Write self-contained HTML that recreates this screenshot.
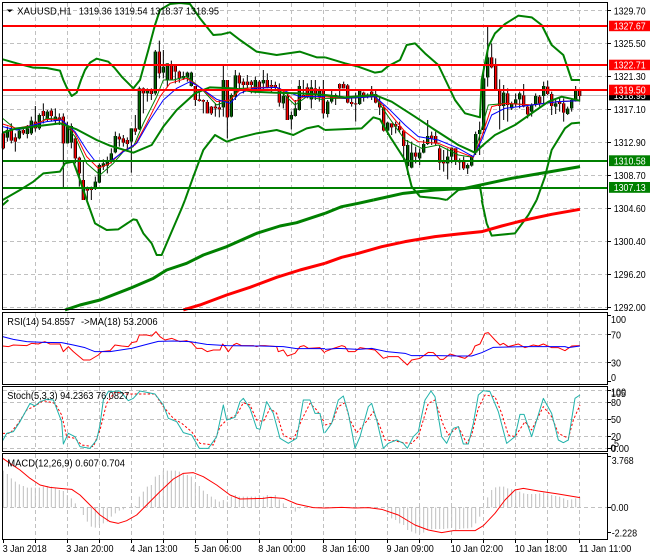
<!DOCTYPE html>
<html><head><meta charset="utf-8"><title>XAUUSD,H1</title>
<style>
html,body{margin:0;padding:0;background:#fff;width:650px;height:560px;overflow:hidden}
svg{display:block}
text{font-family:"Liberation Sans",sans-serif;font-size:10.5px;fill:#000}
.w{fill:#fff}
.g{stroke:#c0c0c0;stroke-width:1;stroke-dasharray:4 3;fill:none}
.p{fill:none;stroke-linejoin:round}
.bb{stroke:#008000;stroke-width:6}
.th{stroke-width:9}
.t{stroke-width:3}
</style></head><body>
<svg width="650" height="560" viewBox="0 0 650 560" xmlns="http://www.w3.org/2000/svg">
<rect width="650" height="560" fill="#fff"/>
<defs>
<path id="ra" d="M10 400V445M34 385V422M46 412V425M70 390V400M106 365V385M130 333V348M154 332V348M178 352V360M190 350V430M226 415V475M238 473V520M250 540V600M262 565V572M274 562V570M358 410V418M370 415V428M382 420V432M406 385V395M430 265V280M454 268V282M478 155V220M514 195V238M526 195V215M538 215V235M586 258V300M598 298V303M610 300V305M622 306V340M634 320V340M646 320V325M658 322V328M682 240V352M718 226V250M730 245V255M742 245V255M754 245V255M778 245V272M802 240V262M814 255V260M826 255V262M838 265V308M862 288V360M910 285V292M922 262V292M946 265V285M970 268V340"/>
<path id="ga" d="M22 390V413M58 392V415M82 385V402M94 362V400M118 345V385M142 335V358M166 350V362M202 380V430M214 378V428M286 545V565M298 495V548M310 490V500M322 483V497M334 460V480M346 408V457M394 385V425M418 265V388M442 267V280M466 155V280M490 200V218M502 190V240M550 228V235M562 218V232M574 218V258M670 240V322M694 285V350M706 226V290M766 240V272M790 240V250M850 288V310M874 345V358M886 325V348M898 258V330M934 262V298M958 268V290"/>
<path id="rb" d="M44 252V265M56 252V265M68 256V308M80 306V312M92 310V313M116 278V285M140 275V290M152 282V308M164 308V322M176 322V392M200 370V382M212 372V380M224 378V390M236 392V438M272 458V470M320 407V415M332 408V430M344 445V488M356 480V490M392 445V485M404 480V487M416 483V505M500 172V202M512 198V270M524 270V318M548 280V315M596 286V320M608 320V343M644 290V310M668 260V282M680 282V318M704 305V312M716 310V338M764 272V288"/>
<path id="gb" d="M8 305V342M20 285V305M32 285V292M104 272V312M128 284V292M188 368V392M248 435V498M260 458V503M284 458V475M296 432V458M308 408V432M368 470V490M380 443V470M428 495V505M440 468V497M452 402V458M464 390V402M476 235V390M488 172V232M536 278V318M560 312V325M572 298V312M584 280V298M620 315V335M632 288V312M656 258V288M692 310V320M728 326V342M740 300V325M752 272V302"/>
</defs>

<!-- grid -->
<path class="g" d="M35.5 3V310M67.5 3V310M99.5 3V310M131.5 3V310M163.5 3V310M195.5 3V310M227.5 3V310M259.5 3V310M291.5 3V310M323.5 3V310M355.5 3V310M387.5 3V310M419.5 3V310M451.5 3V310M483.5 3V310M515.5 3V310M547.5 3V310M579.5 3V310"/>
<path class="g" d="M35.5 313V384M67.5 313V384M99.5 313V384M131.5 313V384M163.5 313V384M195.5 313V384M227.5 313V384M259.5 313V384M291.5 313V384M323.5 313V384M355.5 313V384M387.5 313V384M419.5 313V384M451.5 313V384M483.5 313V384M515.5 313V384M547.5 313V384M579.5 313V384"/>
<path class="g" d="M35.5 387V451M67.5 387V451M99.5 387V451M131.5 387V451M163.5 387V451M195.5 387V451M227.5 387V451M259.5 387V451M291.5 387V451M323.5 387V451M355.5 387V451M387.5 387V451M419.5 387V451M451.5 387V451M483.5 387V451M515.5 387V451M547.5 387V451M579.5 387V451"/>
<path class="g" d="M35.5 454V539M67.5 454V539M99.5 454V539M131.5 454V539M163.5 454V539M195.5 454V539M227.5 454V539M259.5 454V539M291.5 454V539M323.5 454V539M355.5 454V539M387.5 454V539M419.5 454V539M451.5 454V539M483.5 454V539M515.5 454V539M547.5 454V539M579.5 454V539"/>
<path class="g" d="M3 10.5H607M3 43.5H607M3 76.5H607M3 109.5H607M3 142.5H607M3 175.5H607M3 208.5H607M3 241.5H607M3 274.5H607M3 307.5H607M3 334.5H607M3 362.5H607M3 390.5H607M3 402.5H607M3 419.5H607M3 436.5H607M3 448.5H607M3 507.5H607"/>

<!-- bid line -->
<path d="M3 95.5H608" stroke="#c0c0c0" stroke-width="1"/>

<!-- MACD histogram -->
<g stroke="#c0c0c0" fill="none">
<g transform="translate(0,380) scale(.33333)" stroke-width="3">
<path d="M10 382V272M22 382V282M34 382V295M46 382V305M58 382V313M70 382V318M82 382V323M94 382V323M106 382V323M118 382V323M130 382V320M142 382V318M154 382V320M166 382V325M178 382V330M190 382V333M202 382V345M214 382V355M226 382V370M250 382V405M262 382V425M274 382V440M286 382V443M298 382V435M310 382V430M322 382V425M334 382V410M346 382V400M358 382V392M370 382V388M394 382V375M406 382V378M418 382V350M430 382V335M442 382V320M454 382V315M466 382V290M478 382V285M490 382V272M502 382V272M514 382V272M526 382V272M538 382V275M550 382V282M562 382V285M574 382V290M586 382V310M598 382V318M610 382V332M622 382V342M634 382V350M646 382V358M658 382V365M670 382V360M682 382V365M694 382V350M706 382V345M718 382V350M730 382V350M742 382V350M754 382V350M766 382V350M778 382V345M790 382V350M802 382V345M814 382V350M826 382V345M838 382V358M850 382V370M874 382V378M886 382V395M898 382V385"/>
</g>
<g transform="translate(325,380) scale(.33333)" stroke-width="3">
<path d="M188 382V405M200 382V415M212 382V420M224 382V430M236 382V435M248 382V450M260 382V455M272 382V460M284 382V462M296 382V458M308 382V450M320 382V448M332 382V447M344 382V447M356 382V447M368 382V445M380 382V442M392 382V450M404 382V447M416 382V445M428 382V445M440 382V442M452 382V430M464 382V410M476 382V385M488 382V352M500 382V330M512 382V322M524 382V320M536 382V320M548 382V325M560 382V328M572 382V330M584 382V335M596 382V340M608 382V342M620 382V342M632 382V342M644 382V340M656 382V338M668 382V340M680 382V345M692 382V348M704 382V350M716 382V355M728 382V360M740 382V358M752 382V355M764 382V352"/>
</g>
</g>

<!-- group A -->
<g transform="scale(.33333)" fill="none">
<path stroke="#000" stroke-width="3" d="M10 395V448M22 380V425M34 370V430M46 400V455M58 385V418M70 380V405M82 375V415M94 350V405M106 318V395M118 340V390M130 310V370M142 330V365M154 325V365M166 325V370M178 340V375M190 340V562M202 365V430M214 370V445M226 410V490M238 470V560M250 480V600M262 560V600M274 560V600M286 530V570M298 490V550M310 478V510M322 470V520M334 445V490M346 395V460M358 400V440M370 405V440M382 412V445M394 385V518M406 345V405M418 260V390M430 262V340M442 265V305M454 265V300M466 150V285M478 122V235M490 150V235M502 190V262M514 182V240M526 195V250M538 212V248M550 215V240M562 215V245M574 215V260M586 258V318M598 275V305M610 298V340M622 300V340M634 318V345M646 310V350M658 300V352M670 195V350M682 240V415M694 280V352M706 210V300M718 218V265M730 235V280M742 225V270M754 240V280M766 230V280M778 240V280M790 210V270M802 220V265M814 240V275M826 245V270M838 250V320M850 280V325M862 280V360M874 335V388M886 300V350M898 240V332M910 240V290M922 250V295M934 240V325M946 240V300M958 260V305M970 240V355"/>
<use href="#ra" stroke="#000" stroke-width="10"/><use href="#ga" stroke="#000" stroke-width="10"/>
<use href="#ra" stroke="#f00" stroke-width="5"/><use href="#ga" stroke="#006400" stroke-width="5"/>
<polyline class="p t" stroke="#008000" points="8,355 50,390 100,380 140,355 185,358 225,410 260,490 300,525 340,490 370,455 400,440 430,370 470,290 490,240 520,240 560,230 600,262 650,315 690,300 720,265 830,262 885,315 920,290 975,300"/>
<polyline class="p t" stroke="#f00" points="8,372 50,385 100,375 140,358 185,358 225,400 260,470 295,505 330,490 370,452 405,435 440,370 480,290 510,250 560,235 600,262 650,305 690,300 720,270 760,262 830,262 860,280 885,305 920,285 975,295"/>
<polyline class="p t" stroke="#00f" points="8,380 50,390 100,375 140,365 185,360 225,395 260,450 285,483 330,485 370,455 410,430 450,360 490,300 530,265 570,245 600,262 650,298 690,310 720,280 760,265 830,262 860,275 900,290 975,290"/>
<polyline class="p bb" points="8,178 50,190 100,203 140,204 180,212 190,240 200,262 215,288 230,278 243,240 255,210 270,188 290,176 325,185 345,205 365,230 400,265 420,240 445,150 465,75 480,30 510,12 540,9 570,12 600,55 640,105 665,103 690,97 720,120 770,155 830,165 900,155 950,172 975,172"/>
<polyline class="p bb" points="8,398 50,385 100,380 180,370 230,388 290,420 330,437 400,458 455,435 490,380 530,330 585,280 630,262 700,265 760,275 820,278 900,280 975,285"/>
<polyline class="p bb" points="8,600 60,570 100,545 130,520 180,515 195,490 220,485 240,540 260,600"/>
<polyline class="p bb" points="555,600 580,530 610,450 645,405 680,425 710,415 770,400 830,390 880,405 920,385 955,378 975,390"/>
</g>

<!-- group B -->
<g transform="translate(325,0) scale(.33333)" fill="none">
<path stroke="#000" stroke-width="3" d="M8 300V352M20 270V310M32 280V315M44 250V295M56 245V265M68 252V310M80 290V320M92 278V365M104 270V315M116 275V305M128 280V295M140 258V300M152 270V310M164 290V345M176 315V395M188 365V405M200 370V405M212 365V400M224 365V398M236 390V485M248 420V525M260 425V505M272 440V490M284 445V495M296 420V460M308 360V435M320 395V435M332 395V435M344 435V510M356 450V515M368 445V538M380 442V490M392 445V495M404 475V510M416 470V510M428 490V522M440 465V500M452 395V465M464 365V465M476 195V400M488 78V260M500 130V205M512 175V270M524 238V388M536 255V360M548 265V365M560 305V330M572 280V320M584 275V325M596 252V322M608 315V355M620 310V350M632 280V320M644 285V320M656 245V310M668 242V285M680 275V345M692 300V342M704 295V335M716 295V365M728 320V345M740 295V335M752 258V305M764 270V305"/>
<use href="#rb" stroke="#000" stroke-width="10"/><use href="#gb" stroke="#000" stroke-width="10"/>
<use href="#rb" stroke="#f00" stroke-width="5"/><use href="#gb" stroke="#006400" stroke-width="5"/>
<polyline class="p t" stroke="#008000" points="0,295 60,295 150,290 190,350 240,420 290,445 340,435 400,465 445,472 470,385 490,315 540,310 620,315 700,305 765,302"/>
<polyline class="p t" stroke="#f00" points="0,290 60,295 150,290 190,335 240,395 280,425 340,430 400,455 445,472 470,410 500,320 540,310 620,315 700,305 765,302"/>
<polyline class="p t" stroke="#00f" points="0,285 60,295 150,290 190,325 240,375 280,410 340,420 400,445 445,470 470,420 500,345 540,325 620,315 700,305 765,302"/>
<polyline class="p bb" points="0,172 60,190 100,200 150,218 170,215 190,198 225,180 245,135 270,130 300,160 340,195 390,300 420,340 465,352 470,240 490,140 510,100 540,72 580,47 620,52 650,75 680,135 715,165 740,240 765,240"/>
<polyline class="p bb" points="0,285 60,292 150,285 200,305 270,350 330,390 400,435 450,458 480,430 510,405 570,375 620,340 670,305 710,290 765,302"/>
<polyline class="p bb" points="0,390 110,385 145,352 165,358 195,410 240,480 260,560 285,590 340,595 365,600"/>
<polyline class="p bb" points="365,600 400,570 465,560 472,600"/>
<polyline class="p bb" points="635,600 660,530 680,450 720,385 740,370 765,368"/>
<polyline class="p bb th" points="145,600 235,580 330,570 420,565 490,550 560,535 660,518 765,500"/>
</g>

<!-- group C -->
<g transform="translate(0,200) scale(.33333)" fill="none">
<polyline class="p bb" points="8,15 25,0"/>
<polyline class="p bb" points="260,0 285,70 320,90 355,88 400,58 410,60 430,100 455,130 470,165 485,165 515,95 545,25 555,0"/>
<polyline class="p bb th" points="195,330 240,315 300,300 390,265 460,235 500,210 560,190 610,165 680,140 770,100 840,78 890,68 975,40"/>
<polyline class="p th" stroke="#f00" points="550,330 600,315 680,285 750,262 830,232 900,210 975,190"/>
<polyline class="p t" stroke="#f00" points="8,438 25,440 40,435 80,437 95,430 115,432 125,428 135,425 150,432 180,432 190,455 205,440 220,455 250,480 270,480 295,465 305,455 330,452 345,435 365,438 385,440 395,428 410,425 418,405 440,405 455,408 468,395 480,410 495,420 515,415 540,425 560,422 575,428 590,445 605,445 622,455 640,450 660,450 668,432 675,440 685,455 700,435 710,430 725,437 760,437 770,440 780,437 795,437 830,440 835,455 850,450 862,468 885,460 900,440 912,437 925,445 960,443 975,460"/>
<polyline class="p t" stroke="#00f" points="8,410 40,418 80,425 130,427 185,428 220,435 255,443 285,455 330,455 395,445 440,433 475,424 520,423 570,425 620,433 680,437 780,438 850,440 890,446 975,446"/>
</g>

<!-- group D -->
<g transform="translate(325,200) scale(.33333)" fill="none">
<polyline class="p bb th" points="0,40 50,20 100,10 145,0"/>
<polyline class="p bb" points="470,0 485,70 500,107 570,100 610,45 635,0"/>
<polyline class="p th" stroke="#f00" points="0,190 50,172 100,160 170,140 240,125 330,110 400,102 470,95 530,78 600,60 680,43 765,28"/>
<polyline class="p t" stroke="#f00" points="0,455 20,447 50,437 60,440 70,455 90,455 105,443 130,447 150,450 175,475 190,470 220,470 247,495 260,480 285,475 310,457 325,458 345,478 355,478 375,462 395,468 420,475 440,460 450,438 465,432 480,400 490,398 510,420 525,435 535,430 550,440 580,432 600,443 625,435 640,438 655,432 680,443 700,443 720,452 740,438 765,437"/>
<polyline class="p t" stroke="#00f" points="0,448 40,445 100,448 140,445 185,455 240,460 260,467 340,467 400,468 440,468 470,458 505,442 600,440 720,440 730,443 765,438"/>
</g>

<!-- group E -->
<g transform="translate(0,380) scale(.33333)" fill="none">
<polyline class="p t" stroke="#f00" stroke-dasharray="7 6" points="8,160 30,160 55,130 80,90 105,78 130,62 165,70 185,105 200,170 225,175 245,195 280,200 300,150 320,70 345,35 375,42 410,42 465,42 490,80 520,115 545,130 575,155 600,190 640,195 660,140 680,120 710,105 730,68 750,75 770,120 790,125 810,85 830,100 850,165 880,180 905,120 930,70 950,90 972,125"/>
<polyline class="p t" stroke="#20b2aa" points="8,182 20,160 40,155 60,125 90,70 105,78 120,65 140,58 160,60 185,125 190,192 205,160 225,170 240,200 270,205 290,180 300,135 310,60 325,35 360,33 385,62 400,55 420,33 465,42 490,75 505,115 530,125 550,158 575,165 598,205 625,205 650,170 670,75 680,120 705,112 720,65 730,55 750,85 770,145 780,148 800,65 820,100 840,175 865,190 890,175 910,60 930,60 945,100 960,100 972,160"/>
<polyline class="p t" stroke="#f00" points="8,235 30,250 60,270 90,295 120,315 150,322 180,325 215,328 240,345 270,375 300,405 330,425 355,430 380,422 410,405 440,375 480,335 520,297 550,280 580,278 610,290 650,315 690,345 720,357 790,355 810,352 850,355 890,372 940,383 975,384"/>
</g>

<!-- group F -->
<g transform="translate(325,380) scale(.33333)" fill="none">
<polyline class="p t" stroke="#f00" stroke-dasharray="7 6" points="0,135 20,130 40,80 60,68 75,120 95,158 120,130 145,95 165,140 180,180 205,182 235,188 260,190 280,170 310,70 330,60 355,135 370,165 400,140 425,190 440,165 460,85 480,45 510,50 530,100 550,165 570,170 600,125 620,150 655,80 680,110 700,160 730,175 745,120 765,75"/>
<polyline class="p t" stroke="#20b2aa" points="0,158 20,130 40,60 55,48 70,100 90,205 105,170 130,80 140,70 155,120 175,205 190,190 215,180 235,190 247,205 265,170 280,155 300,60 318,33 330,50 350,170 365,190 385,145 400,140 415,192 430,192 445,130 460,45 475,32 495,35 520,95 545,190 570,170 585,103 597,103 620,170 655,55 680,100 700,180 715,188 730,180 750,55 765,45"/>
<polyline class="p t" stroke="#f00" points="0,384 50,382 90,384 130,383 170,388 220,405 270,435 310,450 350,458 385,452 450,452 475,437 510,400 540,360 570,330 595,325 640,333 700,342 765,353"/>
</g>

<!-- horizontal levels -->
<g stroke-width="2" fill="none">
<path stroke="#f00" d="M3 26H608M3 65H608M3 90H608"/>
<path stroke="#008000" d="M3 161H608M3 188H608"/>
</g>

<!-- frames -->
<g stroke="#000" stroke-width="1" fill="none">
<rect x="2.5" y="2.5" width="605" height="307"/>
<rect x="2.5" y="312.5" width="605" height="72"/>
<rect x="2.5" y="386.5" width="605" height="65"/>
<rect x="2.5" y="453.5" width="605" height="86"/>
</g>
<path stroke="#000" stroke-width="1" d="M608 10.5h3M608 43.5h3M608 76.5h3M608 109.5h3M608 142.5h3M608 175.5h3M608 208.5h3M608 241.5h3M608 274.5h3M608 307.5h3M608 315.5h3M608 334.5h3M608 362.5h3M608 381.5h3M608 390.5h3M608 402.5h3M608 419.5h3M608 436.5h3M608 448.5h3M608 456.5h3M608 507.5h3M608 532.5h3M3.5 539v4M35.5 539v4M67.5 539v4M99.5 539v4M131.5 539v4M163.5 539v4M195.5 539v4M227.5 539v4M259.5 539v4M291.5 539v4M323.5 539v4M355.5 539v4M387.5 539v4M419.5 539v4M451.5 539v4M483.5 539v4M515.5 539v4M547.5 539v4M579.5 539v4"/>

<!-- legends -->
<path d="M6.5 9.5h6.4l-3.2 2.8z" fill="#000"/>
<text x="17.3" y="14.3" textLength="54.4" lengthAdjust="spacingAndGlyphs">XAUUSD,H1</text>
<text x="78.7" y="14.3" textLength="140.3" lengthAdjust="spacingAndGlyphs">1319.36 1319.54 1318.37 1318.95</text>
<text x="7.3" y="325.2" textLength="67.7" lengthAdjust="spacingAndGlyphs">RSI(14) 54.8557</text>
<text x="81" y="325.2" textLength="76.7" lengthAdjust="spacingAndGlyphs">-&gt;MA(18) 53.2006</text>
<text x="7.3" y="398.8" textLength="122" lengthAdjust="spacingAndGlyphs">Stoch(5,3,3) 94.2363 76.0827</text>
<text x="7.3" y="466.3" textLength="117.7" lengthAdjust="spacingAndGlyphs">MACD(12,26,9) 0.607 0.704</text>

<!-- price axis -->
<g>
<text x="613.7" y="14.3" textLength="32" lengthAdjust="spacingAndGlyphs">1329.70</text>
<text x="613.7" y="47" textLength="32" lengthAdjust="spacingAndGlyphs">1325.50</text>
<text x="613.7" y="80" textLength="32" lengthAdjust="spacingAndGlyphs">1321.30</text>
<text x="613.7" y="113" textLength="32" lengthAdjust="spacingAndGlyphs">1317.10</text>
<text x="613.7" y="146" textLength="32" lengthAdjust="spacingAndGlyphs">1312.90</text>
<text x="613.7" y="179" textLength="32" lengthAdjust="spacingAndGlyphs">1308.70</text>
<text x="613.7" y="212" textLength="32" lengthAdjust="spacingAndGlyphs">1304.60</text>
<text x="613.7" y="245" textLength="32" lengthAdjust="spacingAndGlyphs">1300.40</text>
<text x="613.7" y="278" textLength="32" lengthAdjust="spacingAndGlyphs">1296.20</text>
<text x="613.7" y="311" textLength="32" lengthAdjust="spacingAndGlyphs">1292.00</text>

<rect x="609" y="20.7" width="41" height="10.5" fill="#f00"/>
<text class="w" x="613.7" y="29.6" textLength="32" lengthAdjust="spacingAndGlyphs">1327.67</text>
<rect x="609" y="59.7" width="41" height="10.5" fill="#f00"/>
<text class="w" x="613.7" y="68.6" textLength="32" lengthAdjust="spacingAndGlyphs">1322.71</text>
<rect x="609" y="90" width="41" height="10.4" fill="#000"/>
<text class="w" x="613.7" y="99" textLength="32" lengthAdjust="spacingAndGlyphs">1318.95</text>
<rect x="609" y="84.7" width="41" height="10.5" fill="#f00"/>
<text class="w" x="613.7" y="93.6" textLength="32" lengthAdjust="spacingAndGlyphs">1319.50</text>
<rect x="609" y="155.3" width="41" height="10.8" fill="#008000"/>
<text class="w" x="613.7" y="164.4" textLength="32" lengthAdjust="spacingAndGlyphs">1310.58</text>
<rect x="609" y="182" width="41" height="10.8" fill="#008000"/>
<text class="w" x="613.7" y="191" textLength="32" lengthAdjust="spacingAndGlyphs">1307.13</text>

<text x="611" y="322.8" textLength="15" lengthAdjust="spacingAndGlyphs">100</text>
<text x="611" y="338.5" textLength="10" lengthAdjust="spacingAndGlyphs">70</text>
<text x="611" y="366.5" textLength="10" lengthAdjust="spacingAndGlyphs">30</text>
<text x="611" y="381" textLength="5" lengthAdjust="spacingAndGlyphs">0</text>

<text x="611" y="395.5" textLength="15" lengthAdjust="spacingAndGlyphs">100</text>
<text x="611" y="397" textLength="15" lengthAdjust="spacingAndGlyphs">105</text>
<text x="611" y="406" textLength="10" lengthAdjust="spacingAndGlyphs">80</text>
<text x="611" y="423" textLength="10" lengthAdjust="spacingAndGlyphs">50</text>
<text x="611" y="440" textLength="10" lengthAdjust="spacingAndGlyphs">20</text>
<text x="610.5" y="451.5" textLength="5" lengthAdjust="spacingAndGlyphs">0</text>
<text x="614" y="447" textLength="5" lengthAdjust="spacingAndGlyphs">5</text>
<text x="611" y="452" textLength="18" lengthAdjust="spacingAndGlyphs">0.00</text>

<text x="611.7" y="464" textLength="22" lengthAdjust="spacingAndGlyphs">3.768</text>
<text x="611" y="511" textLength="17.5" lengthAdjust="spacingAndGlyphs">0.00</text>
<text x="611.7" y="536.5" textLength="25.5" lengthAdjust="spacingAndGlyphs">-2.228</text>
</g>

<!-- time axis -->
<g>
<text x="2.7" y="552" textLength="44" lengthAdjust="spacingAndGlyphs">3 Jan 2018</text>
<text x="66.3" y="552" textLength="47.3" lengthAdjust="spacingAndGlyphs">3 Jan 20:00</text>
<text x="130.3" y="552" textLength="47.3" lengthAdjust="spacingAndGlyphs">4 Jan 13:00</text>
<text x="194.3" y="552" textLength="47.3" lengthAdjust="spacingAndGlyphs">5 Jan 06:00</text>
<text x="258.3" y="552" textLength="47.3" lengthAdjust="spacingAndGlyphs">8 Jan 00:00</text>
<text x="322.3" y="552" textLength="47.3" lengthAdjust="spacingAndGlyphs">8 Jan 16:00</text>
<text x="386.5" y="552" textLength="47.3" lengthAdjust="spacingAndGlyphs">9 Jan 09:00</text>
<text x="450.7" y="552" textLength="52.3" lengthAdjust="spacingAndGlyphs">10 Jan 02:00</text>
<text x="514.7" y="552" textLength="52.3" lengthAdjust="spacingAndGlyphs">10 Jan 18:00</text>
<text x="579" y="552" textLength="52.3" lengthAdjust="spacingAndGlyphs">11 Jan 11:00</text>
</g>
</svg>
</body></html>
